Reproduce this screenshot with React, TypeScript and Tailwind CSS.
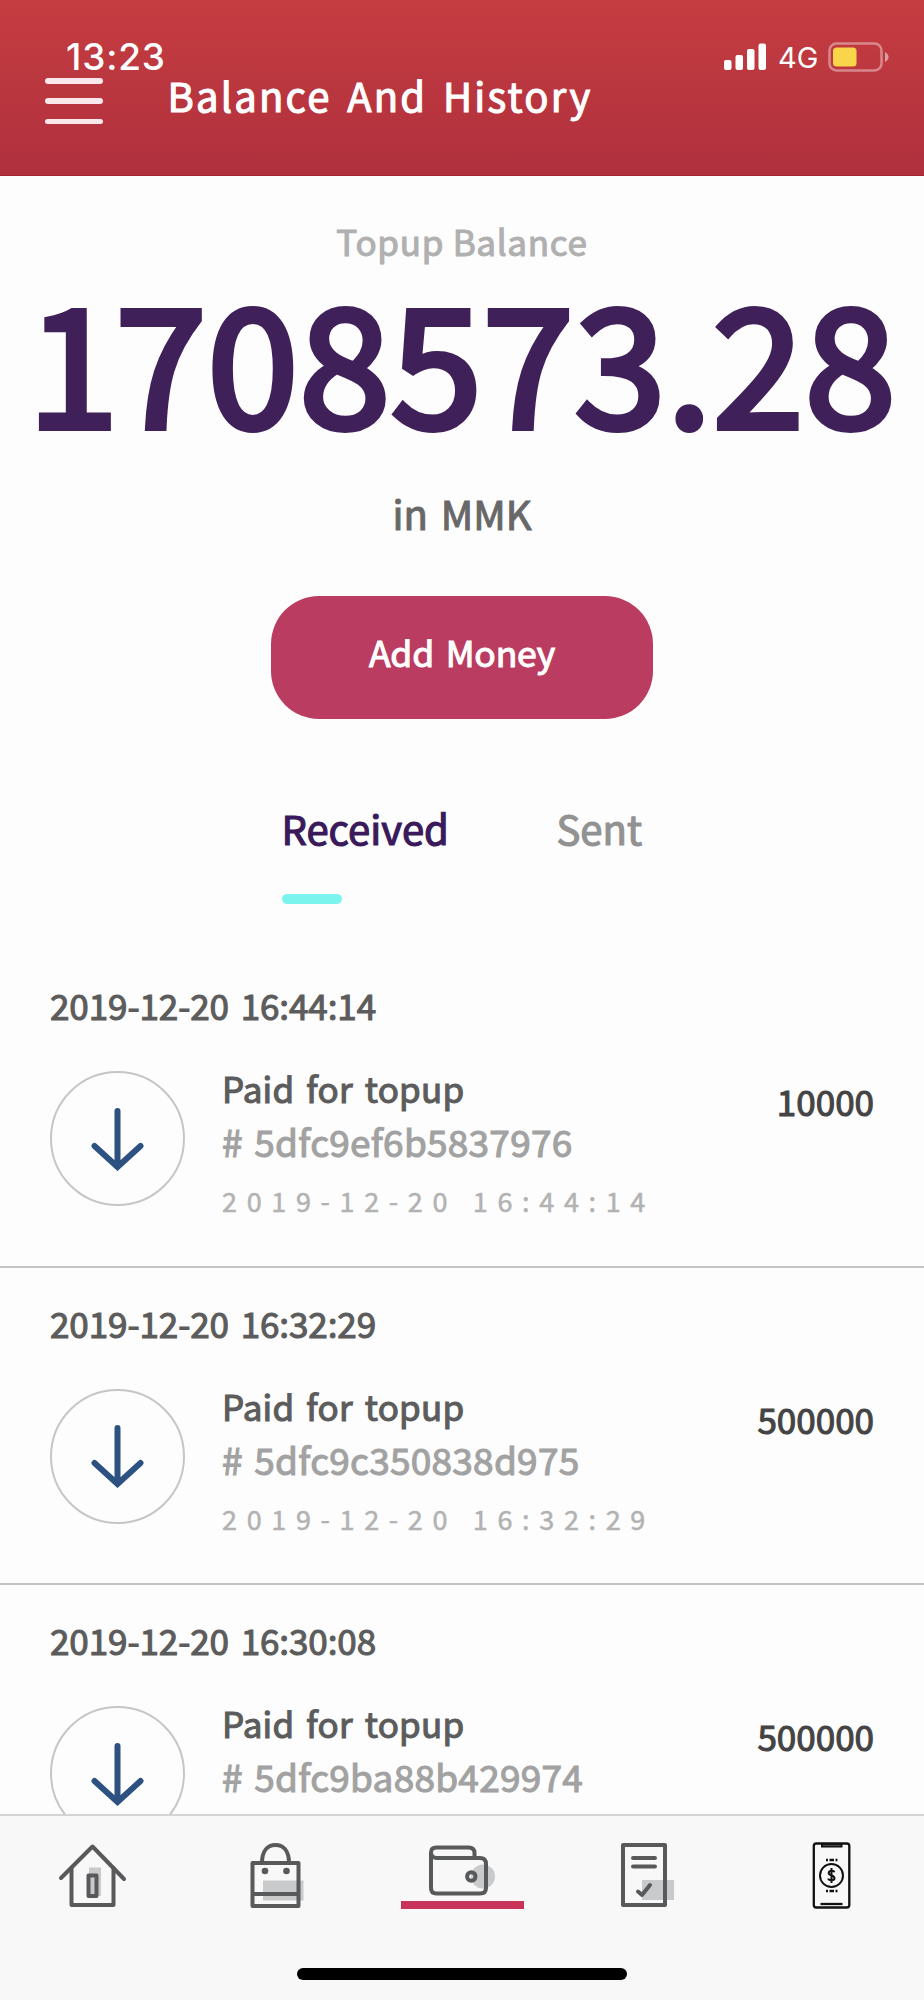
import React from 'react';

interface Transaction {
  date: string;
  title: string;
  reference: string;
  amount: string;
}

const transactions: Transaction[] = [
  { date: '2019-12-20 16:44:14', title: 'Paid for topup', reference: '5dfc9ef6b5837976', amount: '10000' },
  { date: '2019-12-20 16:32:29', title: 'Paid for topup', reference: '5dfc9c350838d975', amount: '500000' },
  { date: '2019-12-20 16:30:08', title: 'Paid for topup', reference: '5dfc9ba88b429974', amount: '500000' },
];

const StatusBar: React.FC = () => (
  <div className="flex h-10 items-center justify-between pl-[66px] pr-[35px] font-['Inter',sans-serif] text-white">
    <span className="text-[37px] leading-10 font-medium tracking-[0.8px]">13:23</span>
    <div className="flex h-10 items-center">
      <svg width="43" height="28" viewBox="0 0 43 28" fill="white">
        <rect x="0" y="17" width="7.5" height="10" rx="2" />
        <rect x="11.5" y="12" width="7.5" height="15" rx="2" />
        <rect x="23" y="6" width="7.5" height="21" rx="2" />
        <rect x="34.5" y="0.5" width="7.5" height="26.5" rx="2" />
      </svg>
      <span className="ml-[11px] w-[40px] pt-[2px] text-[29px] leading-10">4G</span>
      <svg className="ml-[10px]" width="61" height="30" viewBox="0 0 61 30">
        <rect x="1.5" y="1.5" width="52" height="27" rx="7" fill="none" stroke="white" strokeOpacity="0.4" strokeWidth="2.5" />
        <rect x="5" y="5.5" width="23.5" height="19" rx="3.5" fill="#f9d649" />
        <path d="M57 10 Q60.500 12 60.500 15 T57 20 Z" fill="white" fillOpacity="0.5" />
      </svg>
    </div>
  </div>
);

const Header: React.FC = () => (
  <header className="h-[176px] shrink-0 border-b border-[#a82336] bg-linear-to-b from-[#c53d40] to-[#b0303e] pt-[37px]">
    <StatusBar />
    <div className="flex items-start pl-[45px]">
      <button className="mt-px flex h-[46px] w-[58px] flex-col justify-between">
        <span className="h-[5.500px] w-full rounded-full bg-[#f8e8eb]" />
        <span className="h-[5.500px] w-full rounded-full bg-[#f8e8eb]" />
        <span className="h-[5.500px] w-full rounded-full bg-[#f8e8eb]" />
      </button>
      <h1 className="ml-[64.500px] text-[40px] leading-9 tracking-[2.200px] text-white [-webkit-text-stroke:1.1px] [word-spacing:4.500px]">
        Balance And History
      </h1>
    </div>
  </header>
);

const TransactionRow: React.FC<{ item: Transaction }> = ({ item }) => (
  <li className="h-[317.700px] border-b-2 border-[#c4c4c4] px-[50px] pt-[31px] [-webkit-text-stroke:1.1px]">
    <p className="text-[35px] leading-[48px] tracking-[-0.080px] text-[#5c5c5c] [word-spacing:4px]">{item.date}</p>
    <div className="mt-[35px] flex">
      <div className="mt-[7px] flex size-[135px] shrink-0 items-center justify-center rounded-full border-2 border-[#c6c6c6]">
        <svg width="54" height="64" viewBox="0 0 54 64" fill="none" stroke="#2d5282" strokeWidth="6" strokeLinecap="round">
          <path d="M26.500 4V59M3.500 39L26.500 60L49.500 39" />
        </svg>
      </div>
      <div className="ml-[37px]">
        <p className="text-[35px] leading-[48px] tracking-[0.200px] text-[#5c5c5c] [word-spacing:4px]">{item.title}</p>
        <p className="mt-[2px] text-[37px] leading-[54px] tracking-[0.250px] text-[#a2a2a2] [word-spacing:3px]"># {item.reference}</p>
        <p className="mt-[13px] text-[27px] leading-10 tracking-[9.650px] text-[#b2b2b2] [-webkit-text-stroke:0.5px]">{item.date}</p>
      </div>
      <span className="mt-[13px] ml-auto text-[35px] leading-[48px] text-[#444]">{item.amount}</span>
    </div>
  </li>
);

const HomeIcon: React.FC = () => (
  <svg width="70" height="70" viewBox="57 1840 70 70" fill="none" stroke="#58595b" strokeWidth="4" strokeLinecap="round" strokeLinejoin="round">
    <path d="M89 1867.500H101V1896H89Z" fill="#c9cacc" stroke="none" />
    <path d="M61 1878L92.500 1846.500L124 1879" />
    <path d="M71.500 1868V1905H113.500V1868" />
    <path d="M88.500 1875.500H96.500V1896H88.500Z" />
  </svg>
);

const BagIcon: React.FC = () => (
  <svg width="70" height="70" viewBox="242.500 1840 70 70" fill="none" stroke="#58595b" strokeWidth="4" strokeLinejoin="round">
    <path d="M263.500 1880.500H304V1900.500H263.500Z" fill="#c9cacc" stroke="none" />
    <path d="M253 1863H299V1906H253ZM253 1894H299" />
    <path d="M262.500 1863C262.500 1851 268 1845 276 1845S289.500 1851 289.500 1863" />
    <circle cx="265.500" cy="1871" r="3.3" fill="#58595b" stroke="none" />
    <circle cx="287" cy="1871" r="3.3" fill="#58595b" stroke="none" />
  </svg>
);

const WalletIcon: React.FC = () => (
  <svg width="70" height="56" viewBox="427 1842 70 56" fill="none" stroke="#58595b" strokeWidth="4">
    <circle cx="483" cy="1876.500" r="12" fill="#c9cacc" stroke="none" />
    <path d="M431 1853V1888Q431 1893.500 436.500 1893.500H480Q486 1893.500 486 1888V1864Q486 1858 480 1858H436.500Q431 1857.500 431 1852.500T436.500 1847.500H468.500Q474.500 1847.500 474.500 1853V1858" />
    <circle cx="471.300" cy="1876.500" r="4.2" />
  </svg>
);

const InvoiceIcon: React.FC = () => (
  <svg width="70" height="70" viewBox="612 1840 70 70" fill="none" stroke="#58595b" strokeWidth="4" strokeLinecap="round" strokeLinejoin="round">
    <path d="M642 1880H674V1900H642Z" fill="#c9cacc" stroke="none" />
    <path d="M623 1845H665V1905H623Z" />
    <path d="M633 1858H655M633 1866.500H655M638 1891.500L642 1895L650 1885" />
  </svg>
);

const PhonePayIcon: React.FC = () => (
  <svg width="50" height="70" viewBox="807 1840 50 70" fill="none" stroke="#111" strokeWidth="2.300">
    <rect x="813.800" y="1843.500" width="35.500" height="64" rx="2.500" />
    <path d="M822 1844H841.500V1846.500H822Z" fill="#888" strokeWidth="2" />
    <path d="M820.500 1904H842.500" />
    <circle cx="831.500" cy="1875.500" r="11.500" strokeWidth="2" />
    <path d="M826 1860H828M829.500 1860H834M835.500 1860H837.500M826 1891H828M829.500 1891H834M835.500 1891H837.500" />
    <path d="M834.500 1872.200Q834 1870.700 831.500 1870.700T828.700 1873Q828.700 1874.700 831.500 1875.500T834.500 1878.200Q834.500 1880.200 831.500 1880.200T828.300 1878.500M831.500 1868V1883" strokeWidth="2" />
  </svg>
);

const TabBar: React.FC = () => (
  <nav className="flex h-[186px] shrink-0 flex-col border-t-2 border-[#d4d4d4] bg-[#f8f8f8]">
    <div className="grid grid-cols-5 pt-6">
      <button className="flex h-[70px] justify-center">
        <HomeIcon />
      </button>
      <button className="flex h-[70px] justify-center">
        <BagIcon />
      </button>
      <button className="flex h-[70px] flex-col items-center pt-[2px]">
        <WalletIcon />
        <span className="mt-[2.500px] ml-px h-2 w-[123px] bg-[#c8335a]" />
      </button>
      <button className="flex h-[70px] justify-center">
        <InvoiceIcon />
      </button>
      <button className="flex h-[70px] justify-center">
        <PhonePayIcon />
      </button>
    </div>
    <div className="mx-auto mt-[58px] h-3 w-[330px] rounded-full bg-black" />
  </nav>
);

export default function App() {
  return (
    <div className="flex h-[2000px] w-[924px] flex-col overflow-hidden bg-[#fdfdfd] font-['Noto_Sans_CJK_SC',sans-serif]">
      <Header />
      <main className="flex min-h-0 flex-1 flex-col overflow-hidden pt-[41px]">
        <section className="flex flex-col items-center [-webkit-text-stroke:1.1px]">
          <p className="text-[35px] leading-[48px] tracking-[0.700px] text-[#b0b0b0]">Topup Balance</p>
          <p className="mt-[8px] text-[164px] leading-[168px] tracking-[0.800px] whitespace-nowrap text-[#3f2059] [-webkit-text-stroke:6px]">
            <span className="tracking-[-3px]">1</span>708573.28
          </p>
          <p className="mt-[44px] text-[40px] leading-[56px] text-[#686868] [word-spacing:4px]">in MMK</p>
          <button className="mt-[55px] h-[123px] w-[382px] rounded-[48px] bg-[#ba3c61] pb-[12px] text-[35.500px] tracking-[-0.200px] text-white [word-spacing:4px]">
            Add Money
          </button>
        </section>
        <div className="mt-[81px] flex pl-[281.500px] text-[40px] leading-[56px] [-webkit-text-stroke:1.2px]">
          <button className="flex w-[275px] flex-col items-start text-[#3a1a5b]">
            Received
            <span className="mt-[38px] h-[10px] w-[60px] rounded-full bg-[#7af4ed]" />
          </button>
          <button className="self-start text-[#929292]">Sent</button>
        </div>
        <ul className="mt-[46px]">
          {transactions.map((item) => (
            <TransactionRow key={item.date} item={item} />
          ))}
        </ul>
      </main>
      <TabBar />
    </div>
  );
}
